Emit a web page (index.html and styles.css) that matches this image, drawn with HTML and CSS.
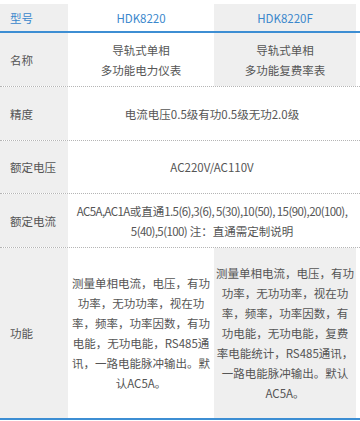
FILE: index.html
```html
<!DOCTYPE html>
<html lang="zh-CN">
<head>
<meta charset="utf-8">
<title>HDK8220 参数</title>
<link rel="stylesheet" href="styles.css">
</head>
<body>
<div class="spec">
  <div class="row row-head">
    <div class="cell label head-label">型号</div>
    <div class="cell c2 head-val">HDK8220</div>
    <div class="cell c3 head-val">HDK8220F</div>
  </div>
  <div class="row row-name">
    <div class="cell label">名称</div>
    <div class="cell c2">导轨式单相<br>多功能电力仪表</div>
    <div class="cell c3">导轨式单相<br>多功能复费率表</div>
  </div>
  <div class="row row-std">
    <div class="cell label">精度</div>
    <div class="cell span">电流电压0.5级有功0.5级无功2.0级</div>
  </div>
  <div class="row row-volt">
    <div class="cell label">额定电压</div>
    <div class="cell span">AC220V/AC110V</div>
  </div>
  <div class="row row-std">
    <div class="cell label">额定电流</div>
    <div class="cell span"><span class="num">AC5A,AC1A</span>或直通<span class="num">1.5(6),3(6), 5(30),10(50), 15(90),20(100),</span><br><span class="num">5(40),5(100)</span> 注：直通需定制说明</div>
  </div>
  <div class="row row-func">
    <div class="cell label">功能</div>
    <div class="cell c2">测量单相电流，电压，有功<br>功率，无功功率，视在功<br>率，频率，功率因数，有功<br>电能，无功电能，RS485通<br>讯，一路电能脉冲输出。默<br>认AC5A。</div>
    <div class="cell c3">测量单相电流，电压，有功<br>功率，无功功率，视在功<br>率，频率，功率因数，有<br>功电能，无功电能，复费<br>率电能统计，RS485通讯，<br>一路电能脉冲输出。默认<br>AC5A。</div>
  </div>
</div>
</body>
</html>
```
FILE: styles.css
```css
html, body {
  margin: 0;
  padding: 0;
  background: #fff;
}
body {
  padding-top: 4px;
  font-family: "Noto Sans CJK SC", "Noto Sans", sans-serif;
  font-size: 11.5px;
  line-height: 20px;
  color: #555;
}
.spec {
  width: 360px;
}
.row {
  display: grid;
  grid-template-columns: 68px 146px 142px 4px;
  border-bottom: 1px dotted #b5b5b5;
  box-sizing: border-box;
}
.row-head {
  height: 29px;
  border-bottom: 2px solid #3d8ed3;
}
.row-name { height: 54px; }
.row-std { height: 54px; }
.row-volt { height: 53px; }
.row-func {
  height: 172px;
  border-bottom: 2px solid #3d8ed3;
}
.cell {
  display: flex;
  align-items: center;
  justify-content: center;
  text-align: center;
  white-space: nowrap;
}
.span {
  display: block;
  align-self: center;
  grid-column: 2 / span 2;
  background: #fff;
}
.num {
  letter-spacing: -0.6px;
}
.label {
  background: #efefef;
  justify-content: flex-start;
  padding-left: 10px;
}
.c2 {
  background: #fff;
}
.c3 {
  background: #efefef;
}
.head-label,
.head-val {
  color: #3a87cc;
}
```
